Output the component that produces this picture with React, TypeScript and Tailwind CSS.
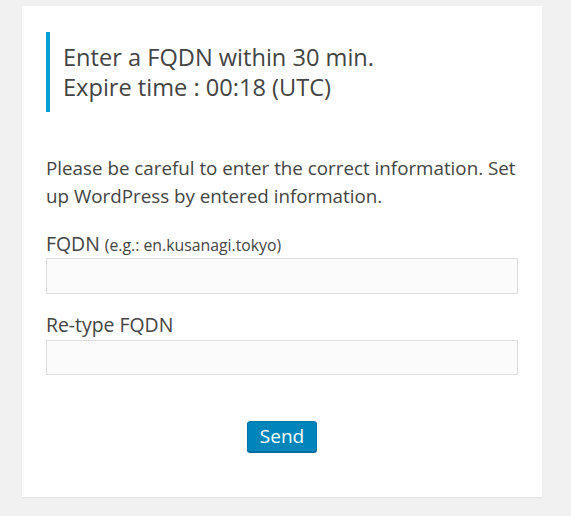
export default function App() {
  return (
    <div className="min-h-screen bg-[#f1f1f1] pt-[6px] pl-[22px] font-['Open_Sans',sans-serif] text-[#444]">
      <div className="w-[520px] h-[491px] bg-white shadow-[0_1px_1px_rgba(0,0,0,0.06)] px-6 pt-[26px]">
        <blockquote className="border-l-4 border-[#00a0d2] pl-[13px] py-[10px] text-[23.6px] leading-[30px]">
          <p>Enter a FQDN within 30 min.</p>
          <p>Expire time : 00:18 (UTC)</p>
        </blockquote>

        <p className="mt-[42px] text-[18.8px] leading-[28px]">
          Please be careful to enter the correct information. Set up WordPress by entered information.
        </p>

        <form className="flex flex-col" onSubmit={(e) => e.preventDefault()}>
          <label className="mt-[22px] text-[19.4px] leading-[24px]">
            FQDN <span className="text-[15.8px]">(e.g.: en.kusanagi.tokyo)</span>
          </label>
          <input
            type="text"
            className="mt-[1px] h-[36px] w-full border border-[#ddd] bg-[#fbfbfb] px-2 outline-none"
          />

          <label className="mt-[19px] text-[19.4px] leading-[24px]">Re-type FQDN</label>
          <input
            type="text"
            className="mt-[3px] h-[35px] w-full border border-[#ddd] bg-[#fbfbfb] px-2 outline-none"
          />

          <div className="mt-[46px] flex justify-center">
            <button
              type="submit"
              className="h-[31px] w-[70px] rounded-[3px] border border-[#0073aa] bg-[#0085ba] text-[19px] leading-none text-white shadow-[0_1px_0_#006799]"
            >
              Send
            </button>
          </div>
        </form>
      </div>
    </div>
  );
}
